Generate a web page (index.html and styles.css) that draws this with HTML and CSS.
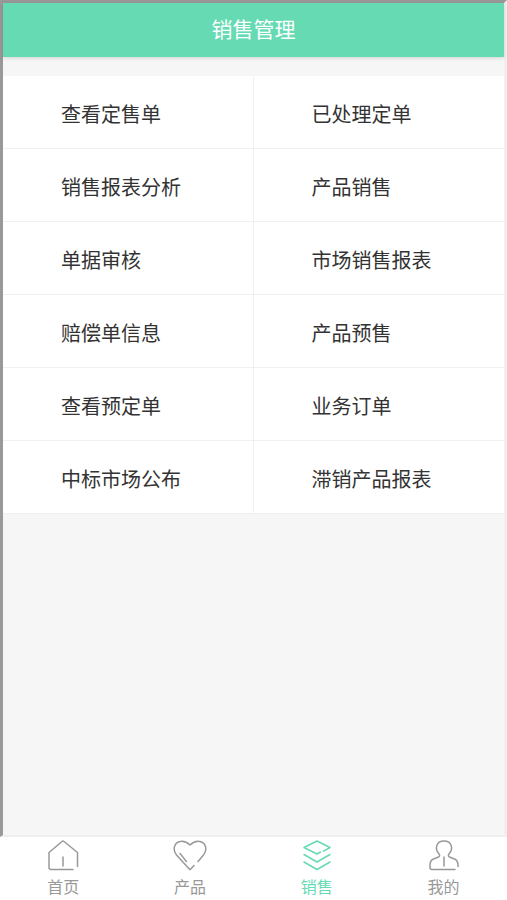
FILE: index.html
```
<!DOCTYPE html>
<html lang="zh-CN">
<head>
    <meta charset="UTF-8">
    <meta name="viewport" content="width=device-width, initial-scale=1.0">
    <title>销售管理</title>
    <link rel="stylesheet" href="styles.css">
</head>
<body>
    <div class="screen">
        <header class="header">
            <h1>销售管理</h1>
        </header>

        <main class="menu">
            <a href="#">查看定售单</a>
            <a href="#">已处理定单</a>
            <a href="#">销售报表分析</a>
            <a href="#">产品销售</a>
            <a href="#">单据审核</a>
            <a href="#">市场销售报表</a>
            <a href="#">赔偿单信息</a>
            <a href="#">产品预售</a>
            <a href="#">查看预定单</a>
            <a href="#">业务订单</a>
            <a href="#">中标市场公布</a>
            <a href="#">滞销产品报表</a>
        </main>
    </div>

    <nav class="tabbar">
        <a href="#">
            <svg viewBox="0 0 36 32">
                <path d="M28 29.5H6Q4 29.5 4 27.500V12.500L17 1.500Q18 .7 19 1.500L32.500 12.500V26.500"/>
                <path d="M18 17V26"/>
            </svg>
            <span>首页</span>
        </a>
        <a href="#">
            <svg viewBox="0 0 36 32">
                <path d="M26 21.500L31.500 15C35.500 10 34 3.500 29 1.700C24.500 .3 21 2 18 5C15 2 11.500 .3 7 1.700C2 3.500 .5 10 4.500 15L17.500 29.300Q18 29.800 18.500 29.300L22 25.500"/>
                <path d="M8 13.500L14.500 21.500"/>
            </svg>
            <span>产品</span>
        </a>
        <a href="#" class="active">
            <svg viewBox="0 0 36 32">
                <path d="M21.500 12L18 14L5 7.500L18 1L31 7.500L24.500 11.200"/>
                <path d="M5 14.500L18 22L31 14.500"/>
                <path d="M5 22L18 29.500L31 22"/>
            </svg>
            <span>销售</span>
        </a>
        <a href="#">
            <svg viewBox="0 0 36 32">
                <path d="M29 29.500H6Q4 29.500 4 27.500V25Q4 20.500 7.500 19L12.500 17Q14.500 16 13 14C8.500 9 10 1 18 1S27.500 9 23 14Q21.500 16 23.500 17L28.500 19Q32 20.500 32 25V26.500"/>
                <path d="M18 17V26"/>
            </svg>
            <span>我的</span>
        </a>
    </nav>
</body>
</html>
```

FILE: styles.css
```
* {
    box-sizing: border-box;
}
body {
    display: flex;
    flex-direction: column;
    min-height: 100vh;
    margin: 0;
    font-family: "Noto Sans CJK SC", sans-serif;
    background-color: #fff;
}
a {
    color: inherit;
    text-decoration: none;
}
.screen {
    flex: 1;
    border-style: solid;
    border-width: 3px 3px 2px 3px;
    border-color: #999 #efefef #efefef #999;
    background-color: #f6f6f6;
}
.header {
    padding: 10px 0 14px;
    background-color: #66dab3;
    box-shadow: 0 1px 4px rgba(0, 0, 0, 0.15);
}
.header h1 {
    margin: 0;
    font-size: 21px;
    font-weight: 400;
    line-height: 30px;
    text-align: center;
    color: #fff;
}
.menu {
    display: grid;
    grid-template-columns: 1fr 1fr;
    margin-top: 19px;
}
.menu a {
    padding: 24px 0 20px 58px;
    border-bottom: 1px solid #f0f0f0;
    font-size: 20px;
    line-height: 28px;
    color: #333;
    background-color: #fff;
}
.menu a:nth-child(odd) {
    border-right: 1px solid #f0f0f0;
}
.tabbar {
    display: flex;
    height: 63px;
}
.tabbar a {
    flex: 1;
    display: flex;
    flex-direction: column;
    align-items: center;
    padding-top: 3px;
    font-size: 16px;
    line-height: 24px;
    color: #999;
}
.tabbar svg {
    width: 36px;
    height: 32px;
    margin-bottom: 2px;
    fill: none;
    stroke: currentColor;
    stroke-width: 1.5;
    stroke-linecap: round;
    stroke-linejoin: round;
}
.tabbar .active {
    color: #66dab3;
}
```
